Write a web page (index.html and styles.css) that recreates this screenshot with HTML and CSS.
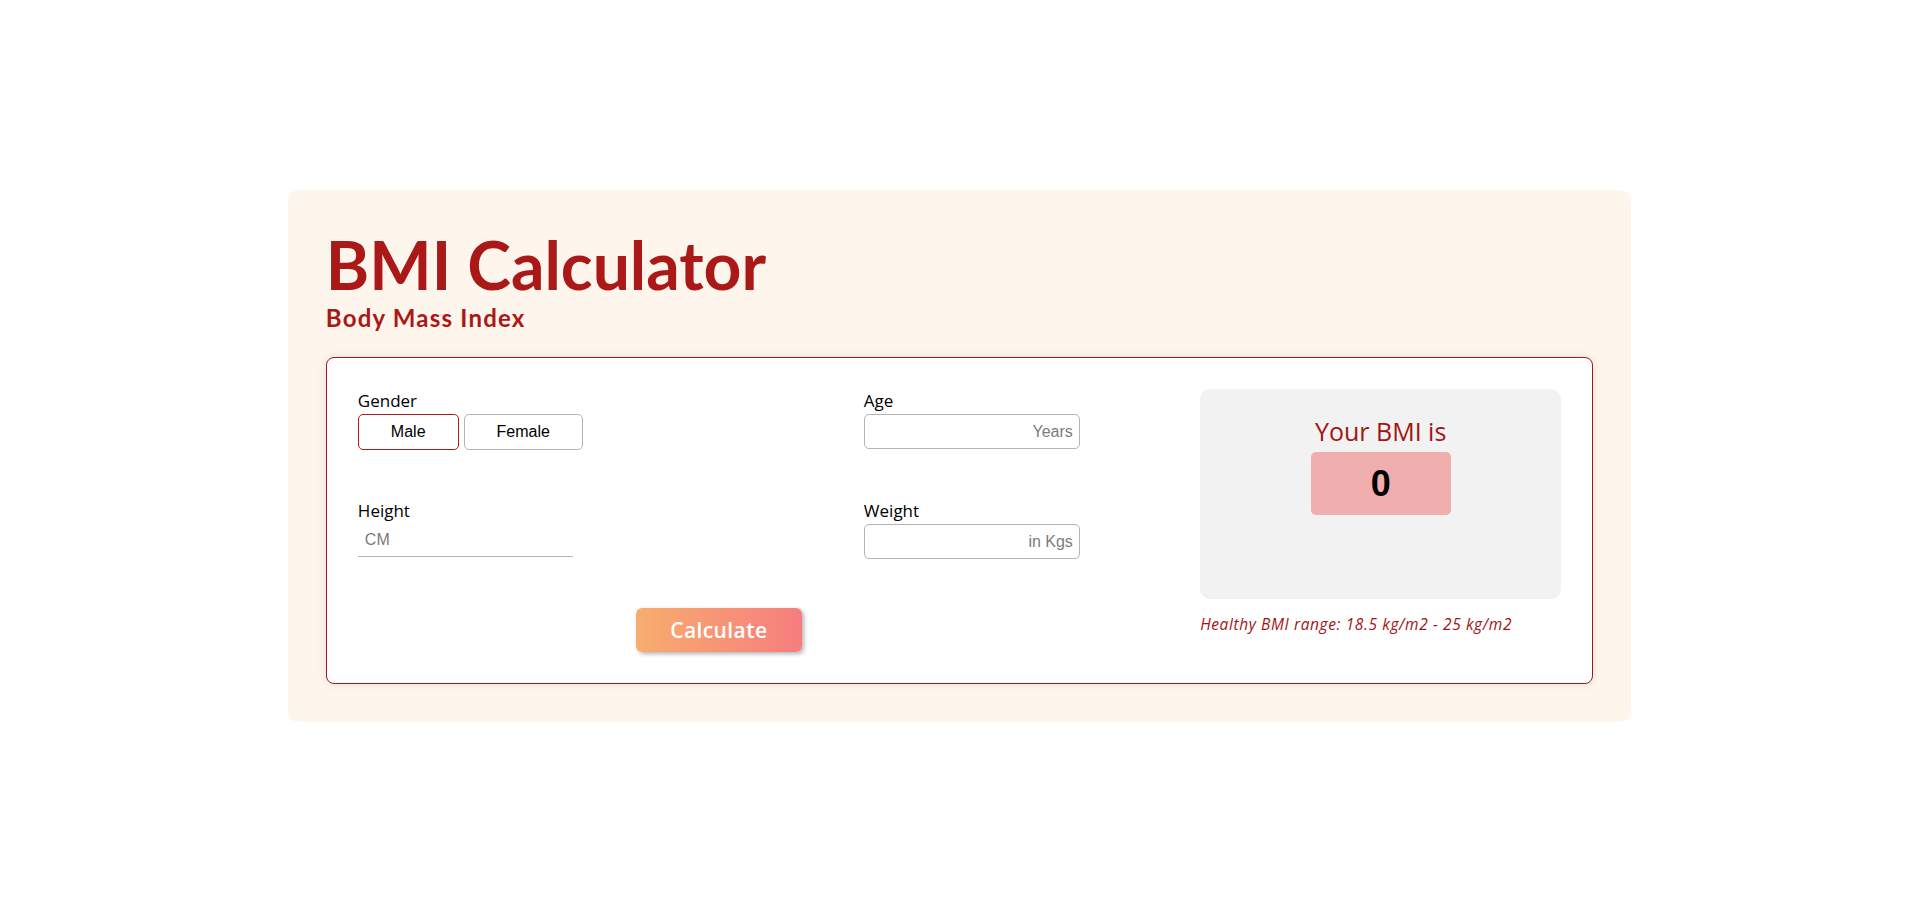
FILE: index.html
```html
<!DOCTYPE html>
<html lang="en">
<head>
    <meta charset="UTF-8">
    <meta name="viewport" content="width=device-width, initial-scale=1.0">
    <title>BMI Calculator</title>
    <link rel="stylesheet" href="styles.css">
</head>
<body>
    <div class="container">
        <h1 class="title">BMI Calculator</h1>
        <h2 class="subtitle">Body Mass Index</h2>

        <div class="calculator">
            <form class="bmi-form" onsubmit="return false;">
                <div class="field">
                    <label>Gender</label>
                    <div class="gender-buttons">
                        <button type="button" class="gender-btn active">Male</button>
                        <button type="button" class="gender-btn">Female</button>
                    </div>
                </div>
                <div class="field">
                    <label for="age">Age</label>
                    <input type="text" id="age" class="box-input" placeholder="Years">
                </div>
                <div class="field">
                    <label for="height">Height</label>
                    <input type="text" id="height" class="line-input" placeholder="CM">
                </div>
                <div class="field">
                    <label for="weight">Weight</label>
                    <input type="text" id="weight" class="box-input" placeholder="in Kgs">
                </div>
                <button type="submit" class="calc-btn">Calculate</button>
            </form>

            <div class="result">
                <div class="result-box">
                    <p class="result-label">Your BMI is</p>
                    <div class="result-value">0</div>
                </div>
                <p class="healthy">Healthy BMI range: 18.5 kg/m2 - 25 kg/m2</p>
            </div>
        </div>
    </div>
</body>
</html>
```

FILE: styles.css
```css
body {
    margin: 0;
    padding-top: 5px;
    box-sizing: border-box;
    display: flex;
    justify-content: center;
    align-items: center;
    min-height: 100vh;
    background: #fff;
    font-family: "Open Sans", Arial, sans-serif;
}
.container {
    width: 70%;
    background-color: #fef6ec;
    border-radius: 10px;
    padding: 39px 38px 38px 38px;
    box-sizing: border-box;
}
.title {
    font-family: Lato, "Open Sans", sans-serif;
    font-weight: bold;
    font-size: 66px;
    line-height: 1;
    color: #aa1818;
    margin: 3px 0 0 0;
}
.subtitle {
    font-family: Lato, "Open Sans", sans-serif;
    font-weight: bold;
    font-size: 24px;
    letter-spacing: 1.2px;
    color: #aa1818;
    margin: 5px 0 25px 0;
}
.calculator {
    display: flex;
    justify-content: space-between;
    align-items: flex-start;
    background: #fff;
    border: 1px solid #9b1b1b;
    border-radius: 8px;
    padding: 31px;
    box-shadow: 0 0 10px rgba(0, 0, 0, 0.1);
}
.bmi-form {
    display: grid;
    grid-template-columns: 506px 216px;
    row-gap: 49px;
}
.field label {
    display: block;
    font-size: 17px;
    line-height: 24px;
    margin-bottom: 1px;
    color: #000;
}
.gender-buttons {
    display: flex;
    gap: 5px;
}
.gender-btn {
    font-family: "Liberation Sans", Arial, sans-serif;
    font-size: 16px;
    line-height: 18px;
    padding: 8px 32px;
    background: #fff;
    color: #000;
    border: 1px solid #b4b4b4;
    border-radius: 5px;
    cursor: pointer;
}
.gender-btn.active {
    border-color: #b31b1b;
}
.box-input {
    width: 216px;
    height: 35px;
    box-sizing: border-box;
    border: 1px solid #b4b4b4;
    border-radius: 5px;
    padding: 0 6px;
    text-align: right;
    font-family: "Liberation Sans", Arial, sans-serif;
    font-size: 16px;
    outline: none;
}
.line-input {
    width: 215px;
    height: 33px;
    box-sizing: border-box;
    border: none;
    border-bottom: 1px solid #b4b4b4;
    padding: 0 7px;
    font-family: "Liberation Sans", Arial, sans-serif;
    font-size: 16px;
    outline: none;
}
.box-input::placeholder,
.line-input::placeholder {
    color: #7b7b7b;
}
.calc-btn {
    grid-column: 1 / 3;
    justify-self: center;
    width: 166px;
    height: 44px;
    border: none;
    border-radius: 6px;
    background: linear-gradient(90deg, #f8ad6d, #f67d7f);
    color: #fff;
    font-family: "Open Sans", sans-serif;
    font-weight: 600;
    font-size: 21px;
    letter-spacing: 0.4px;
    box-shadow: 2px 2px 4px rgba(0, 0, 0, 0.3);
    cursor: pointer;
}
.result {
    width: 361px;
}
.result-box {
    height: 210px;
    box-sizing: border-box;
    background: #f2f2f2;
    border-radius: 10px;
    padding-top: 25px;
    display: flex;
    flex-direction: column;
    align-items: center;
}
.result-label {
    margin: 0 0 4px 0;
    font-size: 25px;
    color: #a31414;
}
.result-value {
    width: 140px;
    height: 63px;
    display: flex;
    justify-content: center;
    align-items: center;
    background: #f0aeae;
    border-radius: 5px;
    font-family: "Liberation Sans", Arial, sans-serif;
    font-weight: bold;
    font-size: 36px;
    color: #000;
}
.healthy {
    margin: 14px 0 0 0;
    font-size: 15.5px;
    letter-spacing: 0.6px;
    font-style: italic;
    color: #a31414;
}
```
